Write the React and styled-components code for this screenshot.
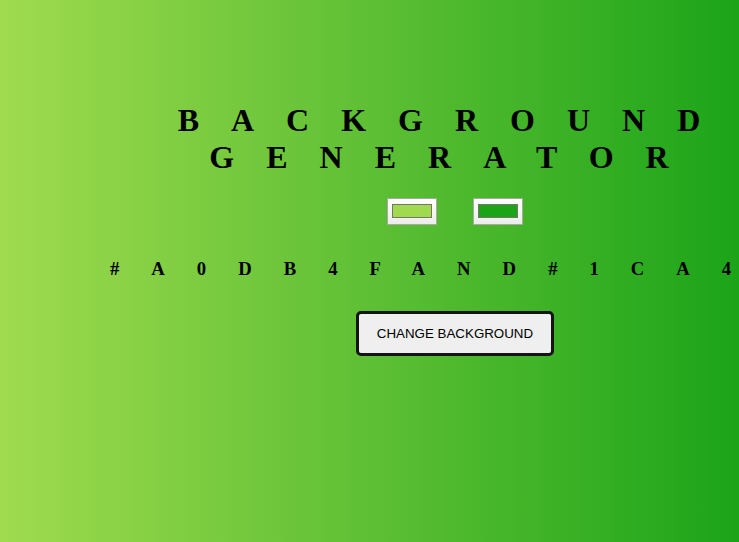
import React, { useState } from "react";
import styled, { createGlobalStyle } from "styled-components";

const GlobalStyle = createGlobalStyle`
  html, body {
    margin: 0;
    padding: 0;
    overflow: hidden;
  }
`;

const randomHex = () =>
  "#" +
  Math.floor(Math.random() * 0xffffff)
    .toString(16)
    .padStart(6, "0");

const App = () => {
  const [left, setLeft] = useState("#a0db4f");
  const [right, setRight] = useState("#1ca419");

  const shuffle = () => {
    setLeft(randomHex());
    setRight(randomHex());
  };

  return (
    <Page $from={left} $to={right}>
      <GlobalStyle />
      <Column>
        <Title>Background Generator</Title>
        <Pickers>
          <Picker
            type="color"
            value={left}
            onChange={(e) => setLeft(e.target.value)}
          />
          <Picker
            type="color"
            value={right}
            onChange={(e) => setRight(e.target.value)}
          />
        </Pickers>
        <Code>
          {left}and{right}
        </Code>
        <ChangeButton onClick={shuffle}>Change Background</ChangeButton>
      </Column>
    </Page>
  );
};

export default App;

const Page = styled.div`
  min-height: 100vh;
  box-sizing: border-box;
  padding-top: 102px;
  overflow: hidden;
  background: linear-gradient(to right, ${(p) => p.$from}, ${(p) => p.$to});
  font-family: "Liberation Serif", "Times New Roman", serif;
  font-weight: bold;
  text-transform: uppercase;
  letter-spacing: 32px;
  text-align: center;
  color: #000;
`;
const Column = styled.div`
  width: 690px;
  margin-left: 110px;
`;
const Title = styled.h1`
  margin: 0;
  font-size: 32px;
  line-height: normal;
`;
const Pickers = styled.div`
  display: flex;
  justify-content: center;
  gap: 36.7px;
  margin-top: 22px;
`;
const Picker = styled.input`
  -webkit-appearance: none;
  appearance: none;
  box-sizing: border-box;
  width: 50px;
  height: 27px;
  padding: 5px 4px 6px;
  margin: 0;
  border: 1px solid #aaa9a0;
  background: linear-gradient(#ffffff, #ececec);
  cursor: pointer;
  &::-webkit-color-swatch-wrapper {
    padding: 0;
  }
  &::-webkit-color-swatch {
    border: 1px solid #7a7468;
    border-radius: 0;
  }
`;
const Code = styled.h3`
  margin: 33px 0 0;
  font-size: 18.72px;
  line-height: normal;
  white-space: nowrap;
  text-align: left;
`;
const ChangeButton = styled.button`
  box-sizing: border-box;
  width: 198px;
  height: 45px;
  margin-top: 31px;
  padding: 0 16px;
  border: 3px solid #141414;
  border-radius: 5px;
  background: #efefef;
  font-family: "Liberation Sans", Arial, sans-serif;
  font-size: 13.333px;
  font-weight: normal;
  letter-spacing: normal;
  text-transform: uppercase;
  color: #000;
  cursor: pointer;
`;
